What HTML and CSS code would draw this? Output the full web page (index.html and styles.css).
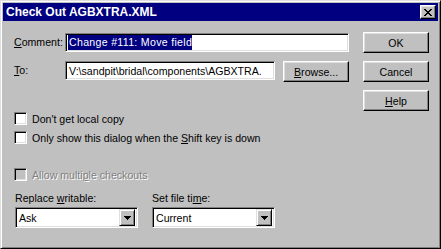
FILE: index.html
```html
<!DOCTYPE html>
<html lang="en">
<head>
    <meta charset="UTF-8">
    <title>Check Out AGBXTRA.XML</title>
    <link rel="stylesheet" href="styles.css">
</head>
<body>
    <div class="window">
        <div class="titlebar">
            <span>Check Out AGBXTRA.XML</span>
            <div class="close">
                <svg width="8" height="7" viewBox="0 0 8 7" shape-rendering="crispEdges"><path d="M0 0h2v1H0z M6 0h2v1H6z M1 1h2v1H1z M5 1h2v1H5z M2 2h4v1H2z M3 3h2v1H3z M2 4h4v1H2z M1 5h2v1H1z M5 5h2v1H5z M0 6h2v1H0z M6 6h2v1H6z"/></svg>
            </div>
        </div>
        <div class="body">
            <div class="main">
                <div class="field-row comment-row">
                    <label class="field-label"><u>C</u>omment:</label>
                    <div class="edit wide"><span class="selected">Change #111: Move field</span></div>
                </div>
                <div class="field-row to-row">
                    <label class="field-label"><u>T</u>o:</label>
                    <div class="edit narrow">V:\sandpit\bridal\components\AGBXTRA.</div>
                    <div class="btn browse"><span><u>B</u>rowse...</span></div>
                </div>

                <div class="check first">
                    <span class="box"></span>
                    <span>Don't get local copy</span>
                </div>
                <div class="check">
                    <span class="box"></span>
                    <span>Only show this dialog when the <u>S</u>hift key is down</span>
                </div>
                <div class="check disabled">
                    <span class="box"></span>
                    <span>Allow multi<u>p</u>le checkouts</span>
                </div>

                <div class="combos">
                    <div class="combo-group">
                        <div class="combo-label">Replace <u>w</u>ritable:</div>
                        <div class="combo">
                            <span class="combo-text">Ask</span>
                            <span class="combo-arrow">
                                <svg width="7" height="4" viewBox="0 0 7 4" shape-rendering="crispEdges"><path d="M0 0h7v1H0z M1 1h5v1H1z M2 2h3v1H2z M3 3h1v1H3z"/></svg>
                            </span>
                        </div>
                    </div>
                    <div class="combo-group">
                        <div class="combo-label">Set file ti<u>m</u>e:</div>
                        <div class="combo">
                            <span class="combo-text">Current</span>
                            <span class="combo-arrow">
                                <svg width="7" height="4" viewBox="0 0 7 4" shape-rendering="crispEdges"><path d="M0 0h7v1H0z M1 1h5v1H1z M2 2h3v1H2z M3 3h1v1H3z"/></svg>
                            </span>
                        </div>
                    </div>
                </div>
            </div>
            <div class="buttons">
                <div class="btn">OK</div>
                <div class="btn">Cancel</div>
                <div class="btn"><span><u>H</u>elp</span></div>
            </div>
        </div>
    </div>
</body>
</html>
```

FILE: styles.css
```css
* {
    box-sizing: border-box;
}
body, html {
    margin: 0;
    padding: 0;
    background: #c0c0c0;
}
body {
    font-family: "Liberation Sans", Arial, sans-serif;
    font-size: 10.6px;
    color: #000;
}
.window {
    width: 441px;
    height: 249px;
    padding: 2px;
    display: flex;
    flex-direction: column;
    background: #c0c0c0;
    border: 1px solid;
    border-color: #dfdfdf #000 #000 #dfdfdf;
    box-shadow: inset 1px 1px #fff, inset -1px -1px #808080;
}
.titlebar {
    height: 18px;
    flex-shrink: 0;
    display: flex;
    align-items: center;
    justify-content: space-between;
    padding: 0 2px 0 3px;
    background: #000080;
    color: #fff;
    font-weight: bold;
    font-size: 12px;
}
.close {
    width: 16px;
    height: 14px;
    display: flex;
    align-items: center;
    justify-content: center;
    background: #c0c0c0;
    border: 1px solid;
    border-color: #fff #000 #000 #fff;
    box-shadow: inset -1px -1px #808080, inset 1px 1px #dfdfdf;
}

.body {
    display: flex;
    gap: 14px;
    padding: 11px 8px 0 11px;
}
.main {
    width: 335px;
}
.buttons {
    width: 66px;
    display: flex;
    flex-direction: column;
    gap: 8px;
}

/* raised push button */
.btn {
    height: 21px;
    display: flex;
    align-items: center;
    justify-content: center;
    border: 1px solid;
    border-color: #fff #000 #000 #fff;
    box-shadow: inset -1px -1px #808080, inset 1px 1px #dfdfdf;
}
.browse {
    width: 66px;
    margin-left: 8px;
}

/* sunken edit field */
.edit {
    height: 19px;
    display: flex;
    align-items: center;
    padding: 0 3px;
    background: #fff;
    white-space: nowrap;
    overflow: hidden;
    border: 1px solid;
    border-color: #808080 #fff #fff #808080;
    box-shadow: inset 1px 1px #000, inset -1px -1px #dfdfdf;
}
.wide {
    width: 284px;
}
.narrow {
    width: 211px;
}
.selected {
    background: #000080;
    color: #fff;
    letter-spacing: 0.3px;
    padding: 1px 0 2px 1px;
    margin-left: -1px;
}

.field-row {
    display: flex;
    align-items: flex-start;
}
.field-label {
    width: 51px;
    flex-shrink: 0;
    white-space: nowrap;
    line-height: 19px;
}
.comment-row {
    margin-top: 1px;
}
.to-row {
    margin-top: 9px;
}

.check {
    display: flex;
    align-items: center;
    gap: 5px;
    height: 13px;
    margin-top: 6px;
}
.check.first {
    margin-top: 30px;
}
.check.disabled {
    margin-top: 24px;
    color: #808080;
    text-shadow: 1px 1px #fff;
}
.box {
    width: 13px;
    height: 13px;
    flex-shrink: 0;
    background: #fff;
    border: 1px solid;
    border-color: #808080 #fff #fff #808080;
    box-shadow: inset 1px 1px #000, inset -1px -1px #dfdfdf;
}
.disabled .box {
    background: #c0c0c0;
}

.combos {
    display: flex;
    gap: 14px;
    margin-top: 11px;
    padding-left: 1px;
}
.combo-group {
    width: 123px;
}
.combo-label {
    line-height: 13px;
    margin-bottom: 2px;
}
.combo {
    height: 21px;
    display: flex;
    align-items: center;
    justify-content: space-between;
    padding: 2px;
    background: #fff;
    border: 1px solid;
    border-color: #808080 #fff #fff #808080;
    box-shadow: inset 1px 1px #000, inset -1px -1px #dfdfdf;
}
.combo-text {
    padding-left: 1px;
}
.combo-arrow {
    width: 16px;
    height: 17px;
    display: flex;
    align-items: center;
    justify-content: center;
    background: #c0c0c0;
    border: 1px solid;
    border-color: #dfdfdf #000 #000 #dfdfdf;
    box-shadow: inset 1px 1px #fff, inset -1px -1px #808080;
}
```
